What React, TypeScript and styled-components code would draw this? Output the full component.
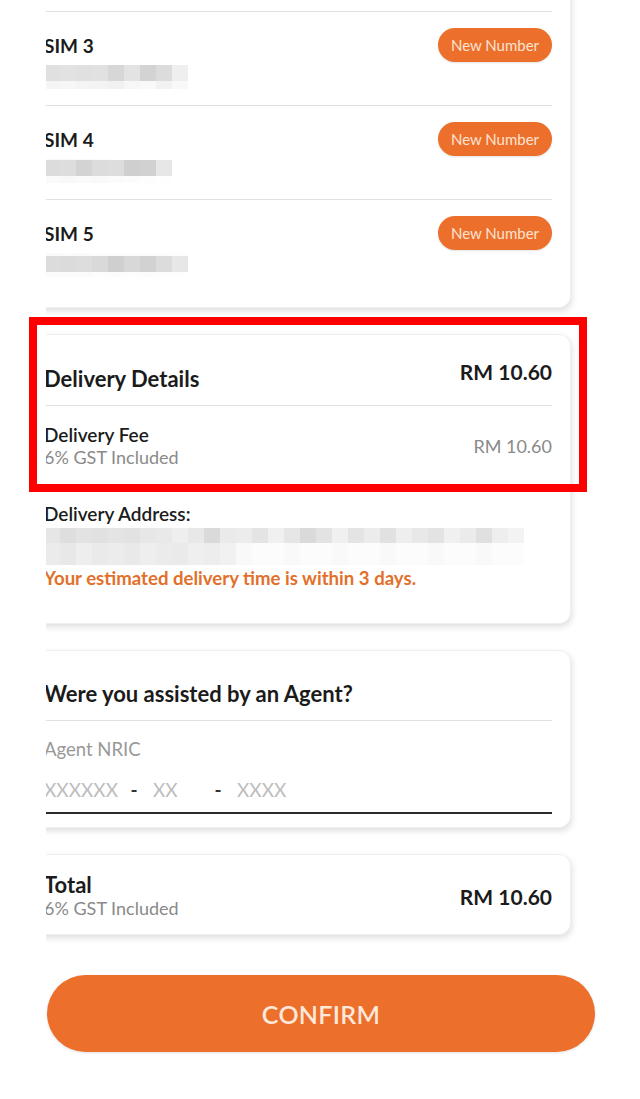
import React from "react";
import styled, { createGlobalStyle } from "styled-components";

const color = {
  orange: "#ec6f2c",
  orangeText: "#e2702b",
  text: "#1b1b1b",
  gray: "#8a8a8a",
  placeholder: "#bdbdbd",
  line: "#e0e0e0",
};

type MosaicRow = { h: number; cells: string[] };

const sim3: MosaicRow[] = [
  { h: 16, cells: ["#e0e0e0", "#e2e2e2", "#e0e0e0", "#e1e1e1", "#d7d7d7", "#e3e3e3", "#d3d3d3", "#dcdcdc", "#efefef"] },
  { h: 8, cells: ["#f5f5f5", "#f7f7f7", "#f4f4f4", "#f3f3f3", "#f1f1f1", "#f7f7f7", "#f9f9f9", "#f2f2f2", "#f8f8f8"] },
];

const sim4: MosaicRow[] = [
  { h: 1, cells: ["#f8f8f8", "#f8f8f8", "#fafafa", "#fbfbfb", "#fdfdfd", "#fdfdfd", "#fefefe", "#fefefe"] },
  { h: 16, cells: ["#dcdcdc", "#dddddd", "#d3d3d3", "#dcdcdc", "#dddddd", "#cfcfcf", "#d1d1d1", "#e7e7e7"] },
  { h: 7, cells: ["#fafafa", "#f8f8f8", "#fafafa", "#f9f9f9", "#fbfbfb", "#fcfcfc", "#fdfdfd", "#fefefe"] },
];

const sim5: MosaicRow[] = [
  { h: 3, cells: ["#fafafa", "#fbfbfb", "#fafafa", "#fcfcfc", "#fbfbfb", "#fcfcfc", "#fbfbfb", "#fcfcfc", "#fdfdfd"] },
  { h: 16, cells: ["#dcdcdc", "#dbdbdb", "#dddddd", "#d9d9d9", "#cfcfcf", "#d8d8d8", "#d2d2d2", "#dcdcdc", "#e7e7e7"] },
  { h: 5, cells: ["#fbfbfb", "#fcfcfc", "#fbfbfb", "#fdfdfd", "#fcfcfc", "#fdfdfd", "#fcfcfc", "#fdfdfd", "#fefefe"] },
];

const addressTop = [
  "#e6e6e6", "#dedede", "#e3e3e3", "#e1e1e1", "#e4e4e4", "#e2e2e2", "#e7e7e7", "#e9e9e9", "#eeeeee", "#e8e8e8",
  "#dadada", "#eaeaea", "#ececec", "#e4e4e4", "#f0f0f0", "#e6e6e6", "#dadada", "#e3e3e3", "#f0f0f0", "#e4e4e4",
  "#ececec", "#e1e1e1", "#eeeeee", "#e8e8e8", "#e3e3e3", "#f0f0f0", "#ebebeb", "#e0e0e0", "#eeeeee", "#f3f3f3",
];
const addressLeft = ["#ebebeb", "#e8e8e8", "#eeeeee", "#eaeaea", "#ececec", "#e9e9e9", "#eeeeee", "#ebebeb", "#eaeaea", "#efefef", "#ededed", "#f1f1f1"];
const addressBottom = addressTop.map((_, i) =>
  i < addressLeft.length ? addressLeft[i] : i % 3 === 0 ? "#f9f9f9" : "#fcfcfc"
);
const address: MosaicRow[] = [
  { h: 15, cells: addressTop },
  { h: 22, cells: addressBottom },
];

const GlobalStyle = createGlobalStyle`
  body {
    margin: 0;
    background: #fff;
    font-family: Lato, "Noto Sans", sans-serif;
    color: ${color.text};
  }
  * { box-sizing: border-box; }
`;

export default function App(): JSX.Element {
  return (
    <Screen>
      <GlobalStyle />
      <Viewport>
        <Stack>
          <SimCard>
            <SimRow name="SIM 3" mosaic={sim3} />
            <SimRow name="SIM 4" mosaic={sim4} />
            <SimRow name="SIM 5" mosaic={sim5} />
          </SimCard>

          <DeliveryCard>
            <CardHeader>
              <HeaderTitle $drop>Delivery Details</HeaderTitle>
              <Price>RM 10.60</Price>
            </CardHeader>
            <Divider $top={14} />
            <FeeRow>
              <div>
                <FeeName>Delivery Fee</FeeName>
                <SubText>6% GST Included</SubText>
              </div>
              <FeeAmount>RM 10.60</FeeAmount>
            </FeeRow>
            <AddressLabel>Delivery Address:</AddressLabel>
            <Mosaic rows={address} />
            <Estimate>Your estimated delivery time is within 3 days.</Estimate>
          </DeliveryCard>

          <AgentCard>
            <HeaderTitle>Were you assisted by an Agent?</HeaderTitle>
            <Divider $top={14} />
            <FieldLabel>Agent NRIC</FieldLabel>
            <NricRow>
              <NricInput $w={83} placeholder="XXXXXX" />
              <Dash>-</Dash>
              <NricInput $w={58} placeholder="XX" />
              <Dash>-</Dash>
              <NricInput $w={120} placeholder="XXXX" />
            </NricRow>
          </AgentCard>

          <TotalCard>
            <div>
              <HeaderTitle>Total</HeaderTitle>
              <SubText>6% GST Included</SubText>
            </div>
            <Price>RM 10.60</Price>
          </TotalCard>
        </Stack>

        <ConfirmButton>CONFIRM</ConfirmButton>
      </Viewport>

      <Highlight />
    </Screen>
  );
}

const SimRow = ({ name, mosaic }: { name: string; mosaic: MosaicRow[] }): JSX.Element => {
  return (
    <>
      <Divider />
      <SimBody>
        <SimHeader>
          <SimName>{name}</SimName>
          <PillButton>New Number</PillButton>
        </SimHeader>
        <Mosaic rows={mosaic} />
      </SimBody>
    </>
  );
};

const Mosaic = ({ rows }: { rows: MosaicRow[] }): JSX.Element => {
  return (
    <MosaicBox>
      {rows.map((row, r) => (
        <MosaicLine key={r} $h={row.h}>
          {row.cells.map((c, i) => (
            <MosaicCell key={i} $c={c} />
          ))}
        </MosaicLine>
      ))}
    </MosaicBox>
  );
};

const Screen = styled.div`
  position: relative;
  width: 640px;
  height: 1099px;
  overflow: hidden;
  background: #fff;
`;

const Viewport = styled.div`
  margin-left: 46px;
  width: 594px;
  height: 1099px;
  overflow: hidden;
`;

const Stack = styled.div`
  display: flex;
  flex-direction: column;
  gap: 26px;
  margin-top: -30px;
  margin-left: -20px;
  padding-right: 30px;
`;

const Card = styled.div`
  width: 545px;
  background: #fff;
  border-radius: 12px;
  border: 1px solid #f0f0f0;
  box-shadow: 1px 3px 6px rgba(0, 0, 0, 0.13);
  padding: 0 18px 0 17px;
`;

const SimCard = styled(Card)`
  padding-top: 40px;
  padding-bottom: 14px;
`;

const DeliveryCard = styled(Card)`
  padding-top: 24px;
  padding-bottom: 33px;
`;

const AgentCard = styled(Card)`
  padding-top: 30px;
  padding-bottom: 13px;
`;

const TotalCard = styled(Card)`
  display: flex;
  justify-content: space-between;
  align-items: center;
  padding-top: 17px;
  padding-bottom: 14px;
`;

const Divider = styled.div<{ $top?: number }>`
  height: 1px;
  background: ${color.line};
  margin-top: ${(p) => p.$top ?? 0}px;
`;

const SimBody = styled.div`
  padding: 16px 0;
`;

const SimHeader = styled.div`
  display: flex;
  justify-content: space-between;
  align-items: center;
  height: 34px;
`;

const SimName = styled.span`
  font-size: 19px;
  font-weight: 700;
  line-height: 23px;
`;

const PillButton = styled.button`
  width: 114px;
  height: 34px;
  border: none;
  border-radius: 17px;
  background: ${color.orange};
  color: #fde3d1;
  font-family: Lato, "Noto Sans", sans-serif;
  font-size: 15px;
  font-weight: 400;
  padding: 0;
  box-shadow: 0 1px 2px rgba(0, 0, 0, 0.12);
`;

const MosaicBox = styled.div`
  display: flex;
  flex-direction: column;
  margin-top: 3px;
`;

const MosaicLine = styled.div<{ $h: number }>`
  display: flex;
  height: ${(p) => p.$h}px;
`;

const MosaicCell = styled.div<{ $c: string }>`
  width: 16px;
  height: 100%;
  background: ${(p) => p.$c};
`;

const CardHeader = styled.div`
  display: flex;
  justify-content: space-between;
  align-items: flex-start;
`;

const HeaderTitle = styled.div<{ $drop?: boolean }>`
  font-size: 22px;
  font-weight: 700;
  line-height: 25px;
  padding-top: ${(p) => (p.$drop ? 7 : 0)}px;
`;

const Price = styled.div`
  font-size: 21px;
  font-weight: 700;
  line-height: 25px;
`;

const FeeRow = styled.div`
  display: flex;
  justify-content: space-between;
  align-items: center;
  margin-top: 17px;
`;

const FeeName = styled.div`
  font-size: 19px;
  font-weight: 600;
  line-height: 23px;
`;

const SubText = styled.div`
  font-size: 18px;
  font-weight: 400;
  line-height: 23px;
  color: ${color.gray};
`;

const FeeAmount = styled.div`
  font-size: 18px;
  line-height: 23px;
  color: ${color.gray};
`;

const AddressLabel = styled.div`
  margin-top: 33px;
  font-size: 19px;
  font-weight: 600;
  line-height: 23px;
`;

const Estimate = styled.div`
  margin-top: 2px;
  font-size: 18.6px;
  font-weight: 700;
  line-height: 23px;
  color: ${color.orangeText};
`;

const FieldLabel = styled.div`
  margin-top: 17px;
  font-size: 18.5px;
  line-height: 23px;
  color: #999;
`;

const NricRow = styled.div`
  display: flex;
  align-items: center;
  margin-top: 17px;
  padding-bottom: 11px;
  border-bottom: 2px solid #2b2b2b;
`;

const NricInput = styled.input<{ $w: number }>`
  width: ${(p) => p.$w}px;
  height: 23px;
  border: none;
  outline: none;
  padding: 0;
  background: transparent;
  font-family: Lato, "Noto Sans", sans-serif;
  font-size: 19px;
  line-height: 23px;
  color: ${color.text};

  &::placeholder {
    color: ${color.placeholder};
  }
`;

const Dash = styled.span`
  width: 14px;
  margin-right: 12px;
  text-align: center;
  font-size: 19px;
  font-weight: 700;
  line-height: 23px;
  color: #333;
`;

const ConfirmButton = styled.button`
  display: block;
  margin: 40px 0 0 1px;
  width: 548px;
  height: 77px;
  border: none;
  border-radius: 39px;
  background: ${color.orange};
  color: #fde8da;
  font-family: Lato, "Noto Sans", sans-serif;
  font-size: 25px;
  font-weight: 600;
  letter-spacing: 0.3px;
  box-shadow: 0 1px 3px rgba(0, 0, 0, 0.12);
`;

const Highlight = styled.div`
  position: absolute;
  left: 29px;
  top: 317px;
  width: 558px;
  height: 175px;
  border: 8px solid #ff0000;
  pointer-events: none;
`;
